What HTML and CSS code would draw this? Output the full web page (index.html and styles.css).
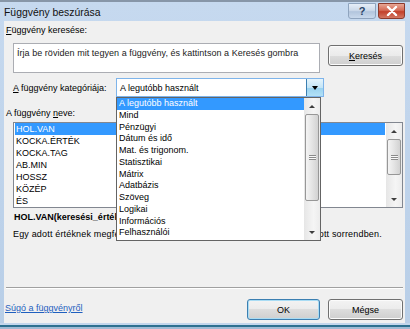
FILE: index.html
```html
<!DOCTYPE html>
<html lang="hu">
<head>
  <meta charset="UTF-8">
  <title>Függvény beszúrása</title>
  <link rel="stylesheet" href="styles.css">
</head>
<body>

  <div class="window">
    <!-- ====== Címsor ====== -->
    <div class="titlebar">
      <span class="title">Függvény beszúrása</span>
      <div class="caption">
        <span class="cap-btn help">?</span>
        <span class="cap-btn close">
          <svg width="12" height="10" viewBox="0 0 12 10">
            <path d="M2 1 L10 9 M10 1 L2 9" stroke="#fff" stroke-width="2.4" stroke-linecap="round"/>
          </svg>
        </span>
      </div>
    </div>

    <!-- ====== Tartalom ====== -->
    <div class="client">
      <div class="lbl"><u>F</u>üggvény keresése:</div>

      <div class="search-row">
        <div class="search-box">Írja be röviden mit tegyen a függvény, és kattintson a Keresés gombra</div>
        <button class="btn btn-search"><u>K</u>eresés</button>
      </div>

      <div class="cat-row">
        <span class="cat-lbl"><u>A</u> függvény kategóriája:</span>
        <div class="select">
          <span class="select-val">A legutóbb használt</span>
          <span class="select-arrow"></span>

          <div class="dropdown">
            <ul class="items">
              <li class="sel">A legutóbb használt</li>
              <li>Mind</li>
              <li>Pénzügyi</li>
              <li>Dátum és idő</li>
              <li>Mat. és trigonom.</li>
              <li>Statisztikai</li>
              <li>Mátrix</li>
              <li>Adatbázis</li>
              <li>Szöveg</li>
              <li>Logikai</li>
              <li>Információs</li>
              <li>Felhasználói</li>
            </ul>
            <div class="vscroll">
              <span class="sb-arrow up"></span>
              <span class="sb-thumb thumb-lg"><i></i></span>
              <span class="sb-track"></span>
              <span class="sb-arrow down"></span>
            </div>
          </div>
        </div>
      </div>

      <div class="lbl lbl-name">A függvény <u>n</u>eve:</div>

      <div class="fn-list">
        <ul class="items">
          <li class="sel">HOL.VAN</li>
          <li>KOCKA.ÉRTÉK</li>
          <li>KOCKA.TAG</li>
          <li>AB.MIN</li>
          <li>HOSSZ</li>
          <li>KÖZÉP</li>
          <li>ÉS</li>
        </ul>
        <div class="vscroll">
          <span class="sb-arrow up"></span>
          <span class="sb-thumb thumb-sm"><i></i></span>
          <span class="sb-track"></span>
          <span class="sb-arrow down"></span>
        </div>
      </div>

      <div class="syntax">HOL.VAN(keresési_érték;tábla;egyezés_típus)</div>
      <div class="desc">Egy adott értéknek megfelelő tömbelem relatív helyét adja eredményül adott sorrendben.</div>

      <div class="spacer"></div>
      <div class="sep"></div>

      <div class="footer">
        <a class="help-link" href="#">Súgó a függvényről</a>
        <button class="btn btn-ok">OK</button>
        <button class="btn btn-cancel">Mégse</button>
      </div>
    </div>

    <div class="frame-bottom"></div>
  </div>

</body>
</html>
```

FILE: styles.css
```css
/* ====== Alap ====== */
* {
  box-sizing: border-box;
}
html, body {
  margin: 0;
}
body {
  font-family: "Liberation Sans", Arial, sans-serif;
  font-size: 9px;
  color: #000;
  background: #b9cfe8;
  width: 410px;
  height: 329px;
  overflow: hidden;
}
u {
  text-decoration: underline;
}

/* ====== Ablak keret ====== */
.window {
  width: 410px;
  height: 329px;
  display: flex;
  flex-direction: column;
  background: linear-gradient(#c6d9ef, #b8cee7);
  border-top: 2px solid #8796a8;
  padding: 0 5px 0 4px;
}
.titlebar {
  height: 19px;
  display: flex;
  justify-content: space-between;
}
.title {
  font-size: 10.4px;
  line-height: 22px;
  color: #111;
}
.caption {
  display: flex;
  gap: 2px;
  margin-top: 1px;
  height: 16px;
}
.cap-btn {
  display: flex;
  align-items: center;
  justify-content: center;
  height: 16px;
  border-radius: 0 0 3px 3px;
}
.help {
  width: 28px;
  border: 1px solid #8fa4be;
  background: linear-gradient(#e6eef8, #cddaea 45%, #b2c5dd 55%, #c9d9ec);
  color: #2a4466;
  font-size: 11px;
  font-weight: bold;
}
.close {
  width: 27px;
  border: 1px solid #8b3a2c;
  background: linear-gradient(#e7a795, #d46a55 45%, #c23f2a 55%, #d37762);
}
.frame-bottom {
  height: 6px;
  background: linear-gradient(#c3d6ec 0 2px, #2d7090 2px 4px, #9fbad4 4px);
  margin: 0 -5px 0 -4px;
}

/* ====== Tartalom ====== */
.client {
  flex: 1;
  background: #f0f0f0;
  display: flex;
  flex-direction: column;
  padding: 3px 2px 3px 2px;
}
.lbl {
  line-height: 12px;
  height: 12px;
}
.search-row {
  display: flex;
  align-items: flex-start;
  margin: 7px 0 0 7px;
}
.search-box {
  width: 307px;
  height: 30px;
  background: #fff;
  border: 1px solid #abadb3;
  padding: 3px 0 0 3px;
  line-height: 12px;
  color: #222;
  white-space: nowrap;
  letter-spacing: 0.04px;
}
.btn {
  font: inherit;
  color: #000;
  height: 21px;
  padding: 0;
  border: 1px solid #707070;
  border-radius: 3px;
  background: linear-gradient(#f3f3f3 0%, #ebebeb 50%, #dddddd 50%, #cfcfcf 100%);
  box-shadow: inset 0 0 0 1px #fbfbfb;
}
.btn-search {
  width: 75px;
  margin: 2px 0 0 auto;
}

/* ====== Kategória ====== */
.cat-row {
  display: flex;
  align-items: center;
  height: 19px;
  margin: 5px 0 0 7px;
}
.cat-lbl {
  width: 103px;
}
.select {
  position: relative;
  width: 208px;
  height: 19px;
  background: #fff;
  border: 1px solid #7eb4ea;
  display: flex;
  align-items: center;
}
.select-val {
  flex: 1;
  padding-left: 3px;
}
.select-arrow {
  width: 17px;
  height: 17px;
  border-left: 1px solid #3c7fb1;
  background: linear-gradient(#e5f4fc, #c4e5f6 50%, #98d1ef 50%, #b2e1f7);
  display: flex;
  align-items: center;
  justify-content: center;
}
.select-arrow::after {
  content: "";
  border-top: 4px solid #000;
  border-left: 3.5px solid transparent;
  border-right: 3.5px solid transparent;
}
.dropdown {
  position: absolute;
  top: 18px;
  left: -1px;
  width: 205px;
  height: 144px;
  background: #fff;
  border: 1px solid #646464;
  display: flex;
  z-index: 2;
}
.items {
  flex: 1;
  list-style: none;
  margin: 0;
  padding: 0 1px;
}
.dropdown .items {
  padding: 0;
}
.dropdown li {
  height: 11.75px;
  line-height: 11.75px;
  padding-left: 2px;
  white-space: nowrap;
}
.sel {
  background: #3399ff;
  color: #fff;
}

/* ====== Görgetősáv ====== */
.vscroll {
  width: 16px;
  display: flex;
  flex-direction: column;
  background: linear-gradient(90deg, #e6e6e6, #f5f5f5 60%, #ececec);
}
.sb-arrow {
  height: 16px;
  display: flex;
  align-items: center;
  justify-content: center;
}
.sb-arrow.up::after {
  content: "";
  border-bottom: 3px solid #3d3d3d;
  border-left: 3px solid transparent;
  border-right: 3px solid transparent;
}
.sb-arrow.down::after {
  content: "";
  border-top: 3px solid #3d3d3d;
  border-left: 3px solid transparent;
  border-right: 3px solid transparent;
}
.sb-thumb {
  margin: 0 1px;
  border: 1px solid #979797;
  border-radius: 2px;
  background: linear-gradient(90deg, #f4f4f4, #e4e4e4 50%, #d2d2d2);
  display: flex;
  align-items: center;
  justify-content: center;
}
.sb-thumb i {
  width: 7px;
  height: 5px;
  background: repeating-linear-gradient(#8a8a8a 0 1px, #f8f8f8 1px 2px);
}
.thumb-lg {
  height: 87px;
}
.thumb-sm {
  height: 36px;
}
.sb-track {
  flex: 1;
}

/* ====== Függvénylista ====== */
.lbl-name {
  margin-top: 10px;
}
.fn-list {
  display: flex;
  height: 86px;
  margin: 3px 0 0 7px;
  background: #fff;
  border: 1px solid #828790;
}
.fn-list li {
  height: 12px;
  line-height: 12px;
  padding-left: 1px;
}
.syntax {
  margin: 3px 0 0 8px;
  line-height: 12px;
  font-weight: bold;
  white-space: nowrap;
}
.desc {
  margin: 5px 0 0 7px;
  line-height: 12px;
  white-space: nowrap;
  letter-spacing: 0.17px;
}
.spacer {
  flex: 1;
}
.sep {
  height: 2px;
  border-top: 1px solid #a0a0a0;
  border-bottom: 1px solid #fff;
}

/* ====== Lábléc ====== */
.footer {
  display: flex;
  align-items: flex-start;
  margin-top: 10px;
}
.help-link {
  margin: 3px 0 0 -1px;
  line-height: 12px;
  color: #1f5fbf;
  text-decoration: underline;
}
.btn-ok {
  width: 73px;
  margin-left: auto;
  border-color: #3c7fb1;
  box-shadow: inset 0 0 0 1px #a9dcf4;
}
.btn-cancel {
  width: 75px;
  margin-left: 8px;
}
```
